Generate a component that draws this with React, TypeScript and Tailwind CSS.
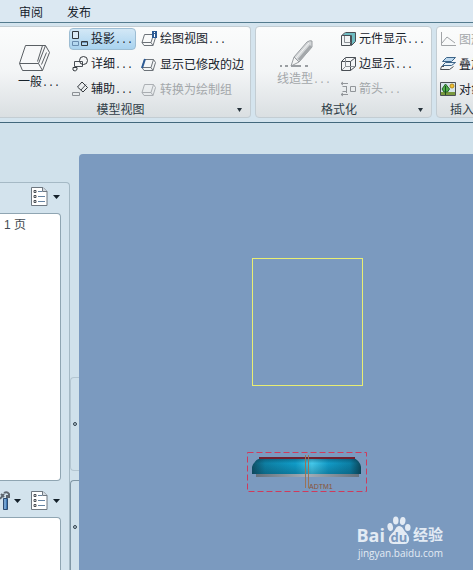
import type { ReactNode } from 'react';
import clsx from 'clsx';

type IconProps = { className?: string };

function Icon({ children, className }: { children: ReactNode; className?: string }) {
  return (
    <svg
      width="16"
      height="16"
      viewBox="0 0 16 16"
      fill="none"
      stroke="#4a4f55"
      strokeWidth="1"
      className={clsx('shrink-0', className)}
      aria-hidden="true"
    >
      {children}
    </svg>
  );
}

function ProjectionIcon() {
  return (
    <Icon>
      <path d="M.5.5h6v7h-6z" fill="#dceaf4" stroke="#33383d" />
      <path d="M.5 10.500h6v4h-6z" stroke="#6a8db0" />
      <path d="M9.500 10.500h6v4h-6z" stroke="#33383d" />
      <path d="M10 11.500h5" stroke="#6a8db0" />
    </Icon>
  );
}

function DetailIcon() {
  return (
    <Icon>
      <path d="M2.500 5.500h8v5h-8z" />
      <circle cx="11.500" cy="4.500" r="4" stroke="#33383d" />
      <path d="M1 11.500h4v1.500c0 2-3 2.500-4 1z" stroke="#33383d" />
    </Icon>
  );
}

function AuxiliaryIcon() {
  return (
    <Icon>
      <path d="M5.500 6 10 1l5.500 5.500L11 11z" stroke="#33383d" />
      <path d="m9 9 5-5.500" />
      <path d="M.5 11.500h7v3h-7z" stroke="#8b9095" />
    </Icon>
  );
}

function SheetIcon({ accent, muted }: { accent?: ReactNode; muted?: boolean }) {
  return (
    <Icon className={muted ? 'opacity-50' : ''}>
      <path
        d="M3.500 3.500h9l2 3-2.500 8h-9l-2-3zM1 11.500h9l2.500-8M10 11.500l2 3"
        stroke="#6d7379"
      />
      {accent}
    </Icon>
  );
}

function CubeIcon({ filled }: { filled?: boolean }) {
  if (filled) {
    return (
      <Icon>
        <path d="M5.500 1.500h10v9l-4 4V4.500h-10z" fill="#6fbcc2" />
        <path d="M1.500 4.500h9v10h-9z" fill="#f2f5f6" />
        <path d="m1.500 4.500 4-3M4.500 5v6.500h6" stroke="#8b9095" />
      </Icon>
    );
  }
  return (
    <Icon>
      <path d="M1.500 5.500h9v9h-9zM1.500 5.500l4-4h10v9l-5 4M10.500 5.500l5-4" />
      <path d="M5.500 1.500v9h10M5.500 10.500l-4 4" stroke="#8b9095" />
    </Icon>
  );
}

function ArrowsIcon() {
  return (
    <Icon className="opacity-55">
      <path d="M1 2.500h7M3 1 1 2.500 3 4M1 13.500h7M3 12l-2 1.500L3 15M2.500 5.500h4v5h-4M6.500 5v7M10.500 5.500h5v5h-5z" />
    </Icon>
  );
}

function ChartIcon() {
  return (
    <Icon className="opacity-50">
      <path d="M1.500 1v13.500H16M2 12l5-6 4 3 4 3" />
    </Icon>
  );
}

function OverlayIcon() {
  return (
    <Icon>
      <path d="M6.500 1.500h9l-4 4h-9z" fill="#bcd8ee" stroke="#3c6488" />
      <path d="M5.500 6.500h10l-4 3h-9z" fill="#e4eff7" stroke="#3c6488" />
      <path d="M4 10.500H1.500l-1 3h9l4-3" />
    </Icon>
  );
}

function PictureIcon() {
  return (
    <Icon>
      <path d="M.5 1.500h15v13H.5z" fill="#d5e4ea" />
      <path d="M1 11h14v3H1z" fill="#79983f" stroke="none" />
      <path d="M5.500 3 2 8l2 3h3.500L9.500 8z" fill="#4fb04a" stroke="#246328" />
      <path d="M5.500 5v9" stroke="#1d4c20" />
      <circle cx="12" cy="5" r="2" fill="#f1c232" stroke="#b58a1c" />
    </Icon>
  );
}

function GeneralViewIcon() {
  return (
    <svg width="33" height="28" viewBox="0 0 33 28" fill="#f7f8f9" stroke="#5a5f64" aria-hidden="true">
      <path d="M7.500 1.500h20l4 7-7 18h-20l-3-7z" />
      <path d="M1.500 19.500h19l7-18M20.500 19.500l4 7M24.500 1.500l-5 16M28.500 8.500l-5 12" fill="none" />
    </svg>
  );
}

function PencilIcon() {
  return (
    <svg width="36" height="31" viewBox="0 0 36 31" fill="none" stroke="#9a9ea2" aria-hidden="true">
      <path d="m17 19 13-15q3-2 5-1v6L22 24z" fill="#d4d7d9" />
      <path d="M22 22 34 8" stroke="#a4a8ab" strokeWidth="3" />
      <path d="m19 20 13-15" stroke="#f2f3f3" />
      <path d="m17 19 5 5-8 4z" fill="#f4f5f5" />
      <path d="M3 28h2M8 28h3M14 28h10M28 28h3" strokeWidth="2" />
    </svg>
  );
}

function PageListIcon() {
  return (
    <svg width="17" height="20" viewBox="0 0 17 20" fill="none" stroke="#6e7780" aria-hidden="true">
      <path d="M.5.5H12l4 4v14H.5z" fill="#fff" />
      <path d="M11.500.5v4H16" fill="#d4dbe2" />
      <path d="M7 4.500h4M7 9.500h7M7 14.500h7" stroke="#6684a3" />
      <path d="M3 3.500h2v2H3zM3 8.500h2v2H3zM3 13.500h2v2H3z" stroke="#4a4f55" />
    </svg>
  );
}

function ToolsIcon() {
  return (
    <svg width="10" height="20" viewBox="0 0 10 20" fill="none" aria-hidden="true">
      <path d="M0 8 4 3M1 3l3 3M4 2q3-2 5 1v3H7V4" stroke="#5e666e" strokeWidth="2" />
      <path d="M3.500 7.500h4v11h-4z" fill="#3e78b5" stroke="#2c4b70" />
      <path d="M5 8v10" stroke="#a6cbea" />
    </svg>
  );
}

function Caret({ className }: IconProps) {
  return (
    <svg width="7" height="4" viewBox="0 0 7 4" className={clsx('shrink-0', className)} aria-hidden="true">
      <path d="M0 0h7L3.500 4z" fill="#14202a" />
    </svg>
  );
}

function Label({ text, more }: { text: string; more?: boolean }) {
  return (
    <span className="pt-0.5 whitespace-nowrap">
      {text}
      {more && <span className="font-['Liberation_Mono',monospace] text-[10px]">...</span>}
    </span>
  );
}

type CommandProps = { icon: ReactNode; text: string; more?: boolean; active?: boolean; disabled?: boolean };

function Command({ icon, text, more, active, disabled }: CommandProps) {
  return (
    <button
      type="button"
      disabled={disabled}
      className={clsx(
        'flex h-[22px] items-center gap-[3px] rounded-sm border px-0.5 text-left',
        active ? 'border-[#9dbdd3] bg-linear-to-b from-[#d3e8f6] to-[#a9d3ef]' : 'border-transparent',
        disabled ? 'text-[#a3a7aa]' : 'text-[#17222b]'
      )}
    >
      {icon}
      <Label text={text} more={more} />
    </button>
  );
}

function Group({ title, caret, className, children }: { title: string; caret?: boolean; className?: string; children: ReactNode }) {
  return (
    <section
      className={clsx(
        'flex shrink-0 flex-col border border-[#c3cdd3] bg-linear-to-b from-[#fbfcfc] via-[#f3f5f6] to-[#dadfe2]',
        className
      )}
    >
      <div className="flex flex-1 pt-px">{children}</div>
      <div className="flex h-[15px] items-center px-1">
        <span className="flex-1 text-center whitespace-nowrap text-[#2f3d47]">{title}</span>
        {caret && (
          <svg width="5" height="4" viewBox="0 0 5 4" className="mr-1" aria-hidden="true">
            <path d="M0 0h5L2.500 4z" fill="#26323b" />
          </svg>
        )}
      </div>
    </section>
  );
}

function Ribbon() {
  return (
    <div className="flex h-[101px] gap-1 overflow-hidden border-y border-[#547b8e] border-b-[#42687c] bg-[#d4e4ee] pt-[3px] pb-1">
      <Group title="模型视图" caret className="w-[251px] rounded-r border-l-0">
        <button type="button" className="flex w-[69px] shrink-0 flex-col items-start pt-4 pl-[18px] text-[#17222b]">
          <GeneralViewIcon />
          <Label text="一般" more />
        </button>
        <div className="flex flex-col gap-[3px]">
          <Command icon={<ProjectionIcon />} text="投影" more active />
          <Command icon={<DetailIcon />} text="详细" more />
          <Command icon={<AuxiliaryIcon />} text="辅助" more />
        </div>
        <div className="ml-0.5 flex flex-col gap-[3px]">
          <Command
            icon={
              <SheetIcon
                accent={
                  <>
                    <path d="M11 0h5v7h-5z" fill="#2c5a94" stroke="none" />
                    <path d="M13.500 1v1M13.500 3v3" stroke="#fff" />
                  </>
                }
              />
            }
            text="绘图视图"
            more
          />
          <Command icon={<SheetIcon accent={<path d="m1 12 3-9" stroke="#2c5a94" strokeWidth="2" />} />} text="显示已修改的边" />
          <Command icon={<SheetIcon muted />} text="转换为绘制组" disabled />
        </div>
      </Group>

      <Group title="格式化" caret className="w-[177px] rounded">
        <button type="button" disabled className="flex w-[81px] shrink-0 flex-col items-start pt-[10px] pl-[21px] text-[#a3a7aa]">
          <PencilIcon />
          <Label text="线造型" more />
        </button>
        <div className="flex flex-col gap-[3px]">
          <Command icon={<CubeIcon filled />} text="元件显示" more />
          <Command icon={<CubeIcon />} text="边显示" more />
          <Command icon={<ArrowsIcon />} text="箭头" more disabled />
        </div>
      </Group>

      <Group title="插入" className="w-[52px] rounded-l">
        <div className="flex flex-col gap-[3px]">
          <Command icon={<ChartIcon />} text="图形" disabled />
          <Command icon={<OverlayIcon />} text="叠加" />
          <Command icon={<PictureIcon />} text="对象" />
        </div>
      </Group>
    </div>
  );
}

function Sidebar() {
  return (
    <aside className="flex w-[70px] shrink-0 flex-col rounded-tr border-t border-r border-[#a5b9c5] bg-[#d3e3ed]">
      <div className="flex h-[30px] items-center justify-end pr-[9px] pb-0.5">
        <button type="button" aria-label="页面设置" className="flex items-center gap-[5px]">
          <PageListIcon />
          <Caret />
        </button>
      </div>
      <div className="mr-2 flex-1 rounded-r border border-l-0 border-[#8fa5b2] bg-white py-[3px] pl-1 text-[#444b52]">
        1 页
      </div>
      <div className="flex h-[36px] items-center justify-end gap-[10px] pt-1 pr-[9px]">
        <button type="button" aria-label="工具" className="flex items-center gap-1">
          <ToolsIcon />
          <Caret />
        </button>
        <button type="button" aria-label="列表" className="flex items-center gap-[5px]">
          <PageListIcon />
          <Caret />
        </button>
      </div>
      <div className="mr-2 h-[53px] rounded-tr border-t border-r border-[#8fa5b2] bg-white" />
    </aside>
  );
}

function SplitterHandle({ className }: { className?: string }) {
  return (
    <div className={clsx('flex h-[94px] items-center justify-center rounded-l border border-r-0', className)}>
      <span className="size-[4px] rounded-full border border-[#32424e] bg-[#b7c8d3]" />
    </div>
  );
}

// Side view of the lamp inside its selected drawing-view frame
function LampView() {
  return (
    <svg width="120" height="40" viewBox="0 0 120 40" fill="none" className="absolute top-[298px] left-[168px]">
      <defs>
        <linearGradient id="body" x1="0" x2="1" y1="0" y2="0">
          <stop offset="0" stopColor="#104f65" />
          <stop offset=".12" stopColor="#0e7fa3" />
          <stop offset=".4" stopColor="#109cc8" />
          <stop offset=".55" stopColor="#45c8ea" />
          <stop offset=".7" stopColor="#129bc7" />
          <stop offset=".9" stopColor="#0c7fa5" />
          <stop offset="1" stopColor="#0c475a" />
        </linearGradient>
        <linearGradient id="shade" x1="0" x2="0" y1="0" y2="1">
          <stop offset="0" stopColor="#05354a" stopOpacity=".5" />
          <stop offset=".35" stopColor="#05354a" stopOpacity="0" />
          <stop offset="1" stopColor="#05354a" stopOpacity=".3" />
        </linearGradient>
        <linearGradient id="base" x1="0" x2="1" y1="0" y2="0">
          <stop offset="0" stopColor="#65717c" />
          <stop offset=".5" stopColor="#a2adb7" />
          <stop offset="1" stopColor="#65717c" />
        </linearGradient>
      </defs>
      <path d="M.5.5h119v39H.5z" stroke="#cf3a5c" strokeDasharray="6 3" />
      <path d="M9 21h103v4H9z" fill="url(#base)" />
      <path d="M5 22v-7q2-7 10-9.500h90q8 2.500 9 9.500v7z" fill="url(#body)" />
      <path d="M5 22v-7q2-7 10-9.500h90q8 2.500 9 9.500v7z" fill="url(#shade)" />
      <path d="M12 6h96" stroke="#72202f" strokeWidth="2" />
      <path d="M58.500 3v33M61.500 3v33" stroke="#9a7358" />
      <text x="62" y="37" fontSize="7" fill="#8a5238" className="font-['Liberation_Sans',sans-serif]">
        ADTM1
      </text>
    </svg>
  );
}

function Watermark() {
  return (
    <div className="absolute right-[30px] bottom-[10px] flex flex-col items-end gap-0.5 text-[#e3ebf4]">
      <div className="flex items-end gap-0.5">
        <span className="font-['Open_Sans',sans-serif] text-[18px] leading-[18px] font-bold">Bai</span>
        <span className="relative flex h-[27px] w-6 items-end justify-center">
          <svg width="24" height="28" viewBox="0 0 26 28" preserveAspectRatio="none" fill="currentColor" className="absolute bottom-0 left-0" aria-hidden="true">
            <ellipse cx="3.500" cy="11" rx="3" ry="4" transform="rotate(-12 3.500 11)" />
            <ellipse cx="9.500" cy="4.500" rx="3" ry="4" />
            <ellipse cx="17" cy="5" rx="3" ry="4" transform="rotate(10 17 5)" />
            <ellipse cx="22.500" cy="11.500" rx="3" ry="3.500" />
            <path d="M13 10c4 0 5 4 7 6s4 4 4 7-2 5-5 5H7c-4 0-5-3-5-5 0-3 3-5 5-7s3-6 6-6z" />
          </svg>
          <span className="relative font-['Open_Sans',sans-serif] text-[13px] leading-[14px] font-bold text-[#7b9abf]">du</span>
        </span>
        <span className="text-[15px] leading-[18px] font-bold">经验</span>
      </div>
      <div className="font-['Open_Sans',sans-serif] text-[10px] leading-[14px]">jingyan.baidu.com</div>
    </div>
  );
}

export default function App() {
  return (
    <div className="flex min-h-screen flex-col overflow-hidden bg-[#d0e1eb] font-['Liberation_Sans','Noto_Sans_CJK_SC',sans-serif] text-[12px] leading-[16px]">
      <nav className="flex h-[22px] items-center gap-6 bg-[#dbe8f2] pt-1 pl-[19px] text-[#17222b]">
        <button type="button">审阅</button>
        <button type="button">发布</button>
      </nav>
      <Ribbon />
      <main className="flex flex-1">
        <div className="flex pt-[59px]">
          <Sidebar />
        </div>
        <div className="-mb-1 flex w-[9px] shrink-0 flex-col justify-end gap-[9px]">
          <SplitterHandle className="border-[#b4c6d1]" />
          <SplitterHandle className="border-[#8097a5]" />
        </div>
        <div className="flex flex-1 flex-col pt-[31px]">
          <div className="relative flex-1 rounded-tl bg-[#7b9abf]">
            <div className="absolute top-[104px] left-[173px] h-[128px] w-[111px] border border-[#e9ee72]" />
            <LampView />
            <Watermark />
          </div>
        </div>
      </main>
    </div>
  );
}
